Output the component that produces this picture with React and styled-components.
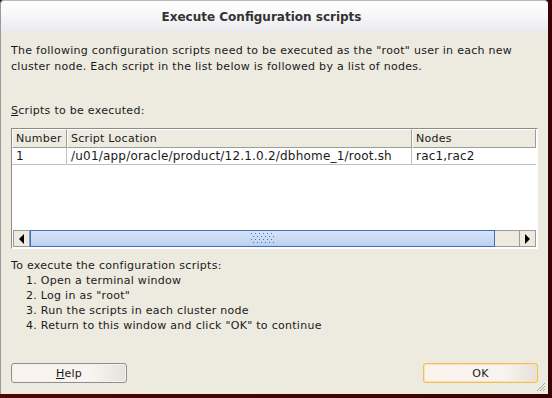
import React from 'react'
import styled, { createGlobalStyle } from 'styled-components'

const Global = createGlobalStyle`
  html, body {
    margin: 0;
    padding: 0;
    background: #4e0606;
  }
  body {
    font-family: "DejaVu Sans", "Liberation Sans", sans-serif;
    font-size: 11px;
    letter-spacing: 0.28px;
    color: #1a1a1a;
  }
`

const Screen = styled.div`
  width: 552px;
  height: 398px;
  background: linear-gradient(90deg, #4e0606 0%, #3a0303 100%);
  overflow: hidden;
`

const Window = styled.div`
  width: 548px;
  height: 394px;
  box-sizing: border-box;
  border-left: 1px solid #9a9a9a;
  border-top: 1px solid #b8b8b8;
  border-radius: 4px 4px 0 0;
  background: #edeae0;
  display: flex;
  flex-direction: column;
  position: relative;
`

const TitleBar = styled.div`
  height: 31px;
  flex: none;
  display: flex;
  align-items: center;
  justify-content: center;
  border-radius: 4px 4px 0 0;
  background: linear-gradient(#fefefe 0%, #f7f7f9 45%, #e9e9eb 100%);
  font-weight: bold;
  font-size: 12px;
  letter-spacing: 0;
  color: #333;
  padding: 0 26px 1px 0;
`

const Body = styled.div`
  flex: 1;
  display: flex;
  flex-direction: column;
  padding: 10px 10px 0 10px;
`

const Para = styled.p`
  margin: 0;
  line-height: 16px;
  color: #1a1a1a;
`

const Label = styled.div`
  margin-top: 28px;
  line-height: 16px;
  u { text-decoration: underline; }
`

const Table = styled.div`
  margin-top: 9px;
  width: 527px;
  height: 121px;
  box-sizing: border-box;
  border: 1px solid #8c8c8c;
  border-right-color: #fff;
  border-bottom-color: #fff;
  background: #fff;
  display: flex;
  flex-direction: column;
`

const Grid = styled.div`
  display: grid;
  grid-template-columns: 55px 345px 1fr;
  margin-right: 1px;
`

const Head = styled.div`
  height: 17px;
  line-height: 17px;
  padding-left: 3px;
  background: #edeae0;
  border-top: 1px solid #fff;
  border-left: 1px solid #fff;
  border-right: 1px solid #9c9c9c;
  border-bottom: 1px solid #9c9c9c;
`

const Cell = styled.div`
  height: 16px;
  line-height: 16px;
  padding-left: 4px;
  font-size: 12px;
  letter-spacing: 0.2px;
  white-space: nowrap;
  border-right: 1px solid #c0c0c0;
  border-bottom: 1px solid #c0c0c0;
  &:last-child { border-right: none; }
`

const Spacer = styled.div`
  flex: 1;
`

const HScroll = styled.div`
  height: 17px;
  display: flex;
  margin: 0 1px 1px 1px;
`

const ArrowBtn = styled.div`
  width: 15px;
  height: 15px;
  border: 1px solid #9a9a9a;
  background: #edeae0;
  display: flex;
  align-items: center;
  justify-content: center;
`

const Thumb = styled.div`
  width: 465px;
  box-sizing: border-box;
  border: 1px solid #3d6fc1;
  background: linear-gradient(#d6e3f6 0%, #c8d9f2 60%, #bccff0 100%);
  display: flex;
  align-items: center;
  justify-content: center;
`

const Track = styled.div`
  flex: 1;
  box-sizing: border-box;
  border-top: 1px solid #9a9a9a;
  border-bottom: 1px solid #9a9a9a;
  background: #edeae0;
`

const Instructions = styled.div`
  margin-top: 9px;
  line-height: 15px;
`

const Step = styled.div`
  padding-left: 15px;
`

const Footer = styled.div`
  margin-top: auto;
  display: flex;
  justify-content: space-between;
  padding: 0 0 11px 0;
`

const Button = styled.div`
  width: ${p => p.$w}px;
  height: 20px;
  box-sizing: border-box;
  border: 1px solid ${p => (p.$default ? '#f0bf5c' : '#8e8e8e')};
  border-radius: 3px;
  background: linear-gradient(90deg, #faf3ee 0%, #f8f4f0 70%, #e6e1d9 100%);
  box-shadow: inset 0 0 0 1px ${p => (p.$default ? '#fbe2ad' : '#f4f2ee')};
  display: flex;
  align-items: center;
  justify-content: center;
  color: #1a1a1a;
  u { text-decoration: underline; }
`

const Grip = styled.div`
  position: absolute;
  right: 2px;
  bottom: 2px;
  width: 10px;
  height: 10px;
`

const Left = () => (
  <svg width="7" height="10" viewBox="0 0 7 10"><path d="M6 0 L1 5 L6 10 Z" fill="#000" /></svg>
)
const Right = () => (
  <svg width="7" height="10" viewBox="0 0 7 10"><path d="M1 0 L6 5 L1 10 Z" fill="#000" /></svg>
)

const Dots = () => {
  const dots = []
  for (let r = 0; r < 4; r++) {
    for (let c = 0; c < 6; c++) {
      dots.push(<rect key={r + '-' + c} x={c * 4 + (r % 2) * 2} y={r * 3 + 1} width="1" height="1" fill="#3d6fc1" />)
    }
  }
  return <svg width="24" height="13" viewBox="0 0 24 13">{dots}</svg>
}

export default function App() {
  return (
    <Screen>
      <Global />
      <Window>
        <TitleBar>Execute Configuration scripts</TitleBar>
        <Body>
          <Para>
            The following configuration scripts need to be executed as the "root" user in each new
            <br />
            cluster node. Each script in the list below is followed by a list of nodes.
          </Para>
          <Label><u>S</u>cripts to be executed:</Label>
          <Table>
            <Grid>
              <Head>Number</Head>
              <Head>Script Location</Head>
              <Head>Nodes</Head>
              <Cell>1</Cell>
              <Cell>/u01/app/oracle/product/12.1.0.2/dbhome_1/root.sh</Cell>
              <Cell>rac1,rac2</Cell>
            </Grid>
            <Spacer />
            <HScroll>
              <ArrowBtn><Left /></ArrowBtn>
              <Thumb><Dots /></Thumb>
              <Track />
              <ArrowBtn><Right /></ArrowBtn>
            </HScroll>
          </Table>
          <Instructions>
            <div>To execute the configuration scripts:</div>
            <Step>1. Open a terminal window</Step>
            <Step>2. Log in as "root"</Step>
            <Step>3. Run the scripts in each cluster node</Step>
            <Step>4. Return to this window and click "OK" to continue</Step>
          </Instructions>
          <Footer>
            <Button $w={116}><span><u>H</u>elp</span></Button>
            <Button $w={115} $default>OK</Button>
          </Footer>
        </Body>
        <Grip>
          <svg width="10" height="10" viewBox="0 0 10 10">
            <path d="M9 1 L1 9 M9 4 L4 9 M9 7 L7 9" stroke="#a9a59c" strokeWidth="1" />
          </svg>
        </Grip>
      </Window>
    </Screen>
  )
}
